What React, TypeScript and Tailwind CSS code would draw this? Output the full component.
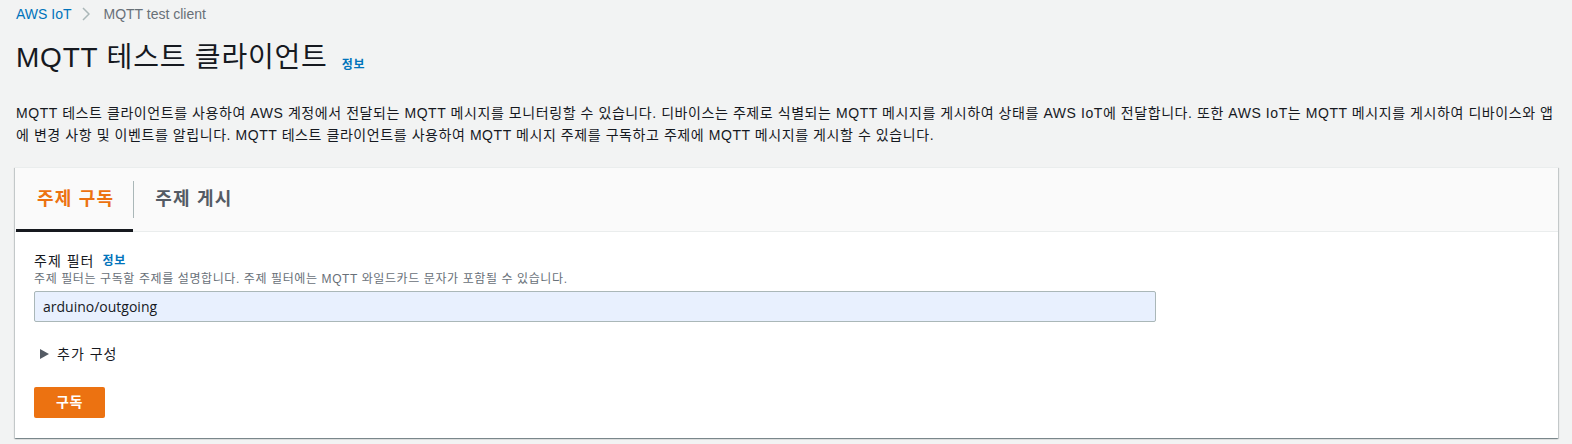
import { useState } from "react";

const font = { fontFamily: '"Liberation Sans", "Noto Sans CJK KR", sans-serif' };

function InfoLink() {
  return <a className="text-[12px] font-bold leading-4 tracking-[0.8px] text-[#0073bb]">정보</a>;
}

export default function App() {
  const [tab, setTab] = useState<"sub" | "pub">("sub");
  const [topic, setTopic] = useState("arduino/outgoing");

  return (
    <div style={font} className="min-h-[444px] w-full bg-[#f2f3f3] px-[15px] pr-[14px] text-[#16191f]">
      <nav className="flex h-[28px] items-center pl-px text-[14px] leading-5">
        <a className="text-[#0073bb]">AWS IoT</a>
        <svg className="ml-[10px] mr-[14px] h-[14px] w-[8px]" viewBox="0 0 8 14" fill="none" stroke="#aab7b8" strokeWidth="1.5">
          <path d="M1 1l6 6-6 6" />
        </svg>
        <span className="text-[#687078]">MQTT test client</span>
      </nav>

      <div className="mt-[12px] flex items-end gap-[14px] pl-px">
        <h1 className="text-[28px] font-normal leading-9 tracking-[0.8px]">MQTT 테스트 클라이언트</h1>
        <span className="pb-0">
          <InfoLink />
        </span>
      </div>

      <p className="mt-[26px] pl-px text-[14px] leading-[22px] tracking-[0.57px]">
        MQTT 테스트 클라이언트를 사용하여 AWS 계정에서 전달되는 MQTT 메시지를 모니터링할 수 있습니다. 디바이스는 주제로 식별되는 MQTT 메시지를 게시하여 상태를 AWS IoT에 전달합니다. 또한 AWS IoT는 MQTT 메시지를 게시하여 디바이스와 앱
        <br />
        에 변경 사항 및 이벤트를 알립니다. MQTT 테스트 클라이언트를 사용하여 MQTT 메시지 주제를 구독하고 주제에 MQTT 메시지를 게시할 수 있습니다.
      </p>

      <section className="mt-[21px] border-t border-[#eaeded] bg-white shadow-[0_1px_1px_0_rgba(0,28,36,0.3),1px_1px_1px_0_rgba(0,28,36,0.15),-1px_1px_1px_0_rgba(0,28,36,0.15)]">
        <div className="flex h-[64px] border-b border-[#eaeded] bg-[#fafafa] pl-px">
          <button
            onClick={() => setTab("sub")}
            className={
              "relative flex items-center pl-[21px] pr-[19px] text-[18px] font-bold tracking-[1.2px] " +
              (tab === "sub" ? "text-[#ec7211]" : "text-[#545b64]")
            }
          >
            주제 구독
            {tab === "sub" ? <span className="absolute bottom-[-1px] left-0 right-0 h-[3px] bg-[#16191f]" /> : null}
          </button>
          <div className="my-[13px] w-px bg-[#aab7b8]" />
          <button
            onClick={() => setTab("pub")}
            className={
              "relative flex items-center px-[21px] text-[18px] font-bold tracking-[1.2px] " +
              (tab === "pub" ? "text-[#ec7211]" : "text-[#545b64]")
            }
          >
            주제 게시
            {tab === "pub" ? <span className="absolute bottom-[-1px] left-0 right-0 h-[3px] bg-[#16191f]" /> : null}
          </button>
        </div>

        <div className="px-[19px] pb-[20px] pt-[19px]">
          <div className="flex items-center gap-[8px] text-[14px] leading-5">
            <label className="tracking-[1px]">주제 필터</label>
            <InfoLink />
          </div>
          <p className="text-[12px] leading-4 tracking-[0.6px] text-[#687078]">
            주제 필터는 구독할 주제를 설명합니다. 주제 필터에는 MQTT 와일드카드 문자가 포함될 수 있습니다.
          </p>
          <input
            value={topic}
            onChange={(e) => setTopic(e.target.value)}
            style={{ fontFamily: '"Open Sans", "Noto Sans CJK KR", sans-serif' }}
            className="mt-[4px] h-[31px] w-[1122px] rounded-[2px] border border-[#aab7b8] bg-[#e8f0fe] px-[8px] text-[14px] text-[#16191f] outline-none"
          />

          <button className="mt-[22px] flex items-center gap-[8px] pl-[6px] text-[14px] leading-5 tracking-[1px] text-[#16191f]">
            <svg className="h-[10px] w-[9px]" viewBox="0 0 9 10" fill="#545b64">
              <path d="M0 0l9 5-9 5z" />
            </svg>
            추가 구성
          </button>

          <button className="mt-[23px] h-[31px] w-[71px] rounded-[2px] bg-[#ec7211] text-[14px] font-bold tracking-[0.5px] text-white">
            구독
          </button>
        </div>
      </section>
    </div>
  );
}
